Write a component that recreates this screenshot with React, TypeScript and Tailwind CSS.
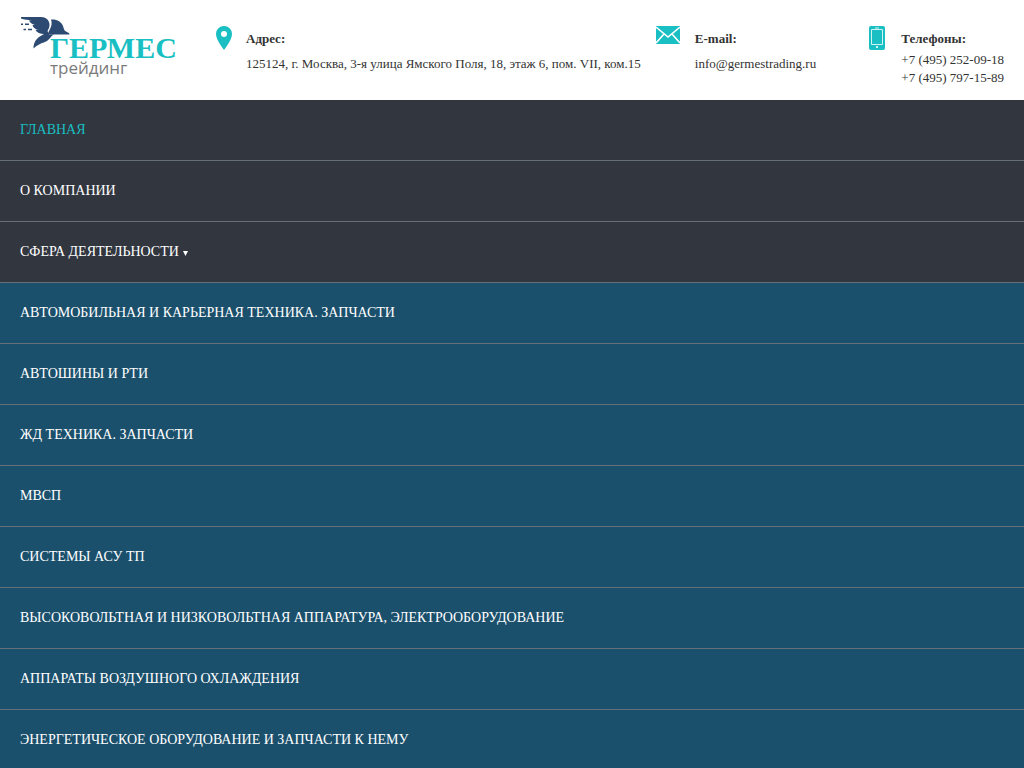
import clsx from 'clsx';

const menu = [
  { label: 'ГЛАВНАЯ', active: true },
  { label: 'О КОМПАНИИ' },
  {
    label: 'СФЕРА ДЕЯТЕЛЬНОСТИ',
    children: [
      'АВТОМОБИЛЬНАЯ И КАРЬЕРНАЯ ТЕХНИКА. ЗАПЧАСТИ',
      'АВТОШИНЫ И РТИ',
      'ЖД ТЕХНИКА. ЗАПЧАСТИ',
      'МВСП',
      'СИСТЕМЫ АСУ ТП',
      'ВЫСОКОВОЛЬТНАЯ И НИЗКОВОЛЬТНАЯ АППАРАТУРА, ЭЛЕКТРООБОРУДОВАНИЕ',
      'АППАРАТЫ ВОЗДУШНОГО ОХЛАЖДЕНИЯ',
      'ЭНЕРГЕТИЧЕСКОЕ ОБОРУДОВАНИЕ И ЗАПЧАСТИ К НЕМУ',
    ],
  },
];

const linkClass = 'block border-b border-[#66707a] px-5 text-sm leading-[60px]';

function Logo() {
  return (
    <a href="#" className="flex w-[180px] shrink-0 flex-col pt-4">
      <svg width="50" height="34" viewBox="0 0 50 34" fill="#2c4a72" aria-hidden="true">
        <path d="M1 1H21C26 1 29 4 29.500 8C29.800 11 28.500 13 27.500 15L29 18.500H34C31 20 30 23 27 25C23 27 18 28 13.500 32.500C13.500 28 15 24 19 21L24 18C20 18 17 16.500 15.500 14H18C15 13 13 11.500 12.500 9H15C12 8 10 6.500 9 4.500H12C8 4 4 3.500 1 2.500Z" />
        <path d="M31 3.500C37 3 41 5.500 43 10C44 13 44 14.500 46 15.500C48 16.500 49.500 17 49.500 18.500H27.500L29 15C31 11.500 32.500 8 31 3.500Z" />
        <path d="M1 7.500H3V9H1ZM5 7.500H9V9H5ZM3.500 12.800H6V14.300H3.500ZM8 12.800H12V14.300H8Z" />
      </svg>
      <span className="-mt-3 pl-[30px] font-['Liberation_Serif',serif] text-[30px] leading-5 font-bold text-[#19bfc2]">ГЕРМЕС</span>
      <span className="pl-[30px] font-['Open_Sans',sans-serif] text-[17px] leading-5 text-[#7b7b7b]">трейдинг</span>
    </a>
  );
}

function PinIcon() {
  return (
    <svg className="mt-[26px] shrink-0" width="16" height="24" viewBox="0 0 16 24" aria-hidden="true">
      <path d="M8 0a8 8 0 0 0-8 8c0 6 8 16 8 16s8-10 8-16a8 8 0 0 0-8-8zm0 5a3 3 0 1 1 0 6 3 3 0 0 1 0-6z" fill="#19bfc2" />
    </svg>
  );
}

function MailIcon() {
  return (
    <svg className="mt-[26px] shrink-0" width="24" height="18" viewBox="0 0 24 18" aria-hidden="true">
      <path fill="#19bfc2" d="M0 0h24v18H0z" />
      <path d="M0 1l12 10L24 1M0 17l8-9M24 17l-8-9" fill="none" stroke="#fff" strokeWidth="1.6" />
    </svg>
  );
}

function PhoneIcon() {
  return (
    <svg className="mt-[26px] shrink-0" width="16" height="24" viewBox="0 0 16 24" aria-hidden="true">
      <rect width="16" height="24" rx="2" fill="#19bfc2" />
      <path d="M2.500 3.500h11v15h-11zM6 2h4" fill="none" stroke="#e4f8f8" strokeWidth="0.900" />
      <circle cx="8" cy="21" r="1.100" fill="#fff" />
    </svg>
  );
}

function Caret() {
  return (
    <svg className="ml-1 inline-block align-baseline" width="5" height="5" viewBox="0 0 5 5" fill="currentColor" aria-hidden="true">
      <path d="M0 0h5L2.500 5z" />
    </svg>
  );
}

export default function App() {
  return (
    <div className="min-h-screen bg-white font-['Liberation_Serif',serif] text-[#333]">
      <header className="flex h-[100px] px-5">
        <Logo />
        <div className="flex grow justify-between pl-4">
          <div className="flex gap-[14px]">
            <PinIcon />
            <div className="pt-[26px] text-[13px] leading-[25px]">
              <b>Адрес:</b>
              <p>125124, г. Москва, 3-я улица Ямского Поля, 18, этаж 6, пом. VII, ком.15</p>
            </div>
          </div>
          <div className="flex gap-[15px]">
            <MailIcon />
            <div className="pt-[26px] text-[13px] leading-[25px]">
              <b>E-mail:</b>
              <p>
                <a href="mailto:info@germestrading.ru">info@germestrading.ru</a>
              </p>
            </div>
          </div>
          <div className="ml-[38px] flex gap-4">
            <PhoneIcon />
            <div className="pt-[26px] text-[13px] leading-[25px]">
              <b>Телефоны:</b>
              <p className="leading-[18px]">
                <a className="block" href="tel:+74952520918">+7 (495) 252-09-18</a>
                <a className="block" href="tel:+74957971589">+7 (495) 797-15-89</a>
              </p>
            </div>
          </div>
        </div>
      </header>

      <nav className="bg-[#32363f] text-white">
        <ul>
          {menu.map((item) => (
            <li key={item.label}>
              <a href="#" className={clsx(linkClass, item.active && 'text-[#19bfc2]')}>
                {item.label}
                {item.children && <Caret />}
              </a>
              {item.children && (
                <ul className="bg-[#1b506c]">
                  {item.children.map((label) => (
                    <li key={label}>
                      <a href="#" className={linkClass}>{label}</a>
                    </li>
                  ))}
                </ul>
              )}
            </li>
          ))}
        </ul>
      </nav>
    </div>
  );
}
